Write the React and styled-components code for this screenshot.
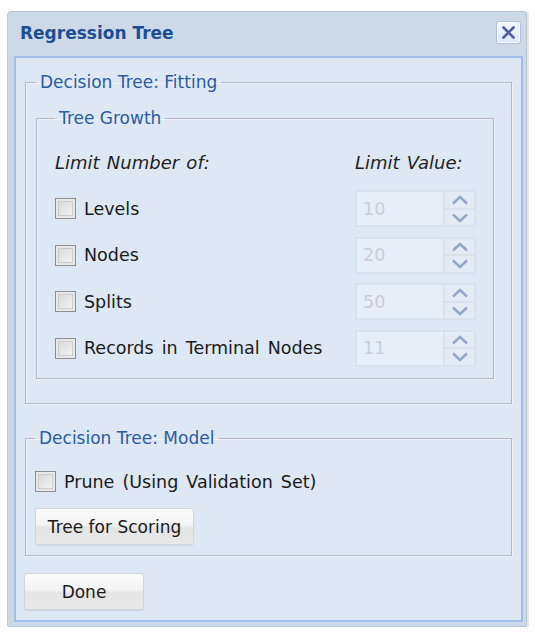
import React from "react";
import styled, { createGlobalStyle } from "styled-components";

const Global = createGlobalStyle`
  html, body { margin: 0; padding: 0; background: #ffffff; }
  body { font-family: "DejaVu Sans", "Noto Sans", sans-serif; }
  * { box-sizing: border-box; }
`;

const Window = styled.div`
  margin: 11px 0 0 7px;
  width: 520px;
  height: 616px;
  background: #cdd9e6;
  border: 1px solid #b9c5d3;
  border-radius: 4px 4px 2px 2px;
  display: flex;
  flex-direction: column;
  box-shadow: 2px 0 0 #e3e7ec;
`;

const TitleBar = styled.div`
  height: 44px;
  display: flex;
  align-items: center;
  justify-content: space-between;
  padding: 0 5px 3px 12px;
`;

const Title = styled.div`
  font-weight: bold;
  font-size: 17px;
  color: #1c4f92;
`;

const CloseButton = styled.div`
  width: 25px;
  height: 23px;
  border: 1px solid #a9c3e6;
  border-radius: 3px;
  background: linear-gradient(#f4f8fd, #dce8f6);
  box-shadow: inset 0 0 0 1px #ffffff;
  display: flex;
  align-items: center;
  justify-content: center;
`;

const Content = styled.div`
  flex: 1;
  margin: 0 3px 4px 6px;
  border: 2px solid #9fc0ea;
  background: #dee8f4;
  padding: 13px 9px 0 9px;
  display: flex;
  flex-direction: column;
`;

const Group = styled.fieldset`
  margin: ${(p) => p.$m || "0"};
  border: 1px solid #b4b9c6;
  box-shadow: 1px 1px 0 #eef2f8, inset 1px 1px 0 #eef2f8;
  padding: ${(p) => p.$pad};
  height: ${(p) => p.$h};
`;

const Legend = styled.legend`
  font-size: 17px;
  color: #2a5ba3;
  padding: 0 4px;
  margin-left: 0;
  line-height: 22px;
`;

const LimitGrid = styled.div`
  display: grid;
  grid-template-columns: 1fr 121px;
  grid-auto-rows: 46.5px;
  align-items: center;
`;

const Header = styled.div`
  font-style: italic;
  font-size: 18px;
  word-spacing: 1.5px;
  color: #1e1e1e;
  height: 37px;
  display: flex;
  align-items: center;
`;

const CheckRow = styled.label`
  display: flex;
  align-items: center;
  gap: 8px;
  font-size: 17.5px;
  word-spacing: 2.5px;
  color: #1a1a1a;
`;

const Box = styled.span`
  width: 21px;
  height: 21px;
  border: 1px solid #8e8e8e;
  background: linear-gradient(135deg, #d6d6d6, #f6f6f6);
  box-shadow: inset 0 0 0 2px #e8e8e8, inset 0 0 0 3px #cbcbcb;
  flex: none;
`;

const Spin = styled.div`
  display: flex;
  width: 121px;
  height: 37px;
`;

const SpinInput = styled.div`
  width: 90px;
  height: 37px;
  border: 2px solid #d9e1ec;
  background: #e8eef7;
  color: #c6cedb;
  font-size: 17.5px;
  display: flex;
  align-items: center;
  padding-left: 6px;
`;

const SpinArrows = styled.div`
  width: 31px;
  height: 37px;
  border: 2px solid #d9e1ec;
  border-left: none;
  display: flex;
  flex-direction: column;
`;

const Arrow = styled.div`
  flex: 1;
  display: flex;
  align-items: center;
  justify-content: center;
  background: #e4ebf5;
  & + & { border-top: 2px solid #d9e1ec; }
`;

const ModelBody = styled.div`
  display: flex;
  flex-direction: column;
  align-items: flex-start;
  gap: 16px;
`;

const Button = styled.div`
  width: ${(p) => p.$w};
  height: 37px;
  border: 1px solid #d2d6dc;
  border-radius: 3px;
  background: linear-gradient(#fbfbfb 0%, #f3f3f3 45%, #e4e4e4 55%, #e9e9e9 100%);
  box-shadow: 0 1px 1px rgba(0,0,0,0.08);
  font-size: 17px;
  color: #1a1a1a;
  display: flex;
  align-items: center;
  justify-content: center;
`;

const Footer = styled.div`
  padding: 17px 0 0 0;
  margin-left: -1px;
`;

const Chevron = ({ up }) => (
  <svg width="18" height="10" viewBox="0 0 18 10">
    <path
      d={up ? "M2 8.5 L9 2 L16 8.5" : "M2 1.5 L9 8 L16 1.5"}
      fill="none"
      stroke="#93a7c9"
      strokeWidth="2.6"
    />
  </svg>
);

const rows = [
  ["Levels", "10"],
  ["Nodes", "20"],
  ["Splits", "50"],
  ["Records in Terminal Nodes", "11"],
];

export default function App() {
  return (
    <>
      <Global />
      <Window>
        <TitleBar>
          <Title>Regression Tree</Title>
          <CloseButton>
            <svg width="15" height="15" viewBox="0 0 15 15">
              <path d="M2.5 2.5 L12.5 12.5 M12.5 2.5 L2.5 12.5" stroke="#4d5c9a" strokeWidth="2.6" strokeLinecap="round" />
            </svg>
          </CloseButton>
        </TitleBar>
        <Content>
          <Group $pad="0 17px 0 10px" $h="333px">
            <Legend>Decision Tree: Fitting</Legend>
            <Group $pad="10px 17px 0 18px" $h="272px" $m="14px 0 0 0">
              <Legend>Tree Growth</Legend>
              <LimitGrid>
                <Header>Limit Number of:</Header>
                <Header>Limit Value:</Header>
                {rows.map(([label, val]) => (
                  <React.Fragment key={label}>
                    <CheckRow>
                      <Box />
                      {label}
                    </CheckRow>
                    <Spin>
                      <SpinInput>{val}</SpinInput>
                      <SpinArrows>
                        <Arrow><Chevron up /></Arrow>
                        <Arrow><Chevron /></Arrow>
                      </SpinArrows>
                    </Spin>
                  </React.Fragment>
                ))}
              </LimitGrid>
            </Group>
          </Group>
          <Group $pad="22px 9px 0 9px" $h="129px" $m="23px 0 0 0">
            <Legend>Decision Tree: Model</Legend>
            <ModelBody>
              <CheckRow>
                <Box />
                Prune (Using Validation Set)
              </CheckRow>
              <Button $w="159px">Tree for Scoring</Button>
            </ModelBody>
          </Group>
          <Footer>
            <Button $w="120px">Done</Button>
          </Footer>
        </Content>
      </Window>
    </>
  );
}
